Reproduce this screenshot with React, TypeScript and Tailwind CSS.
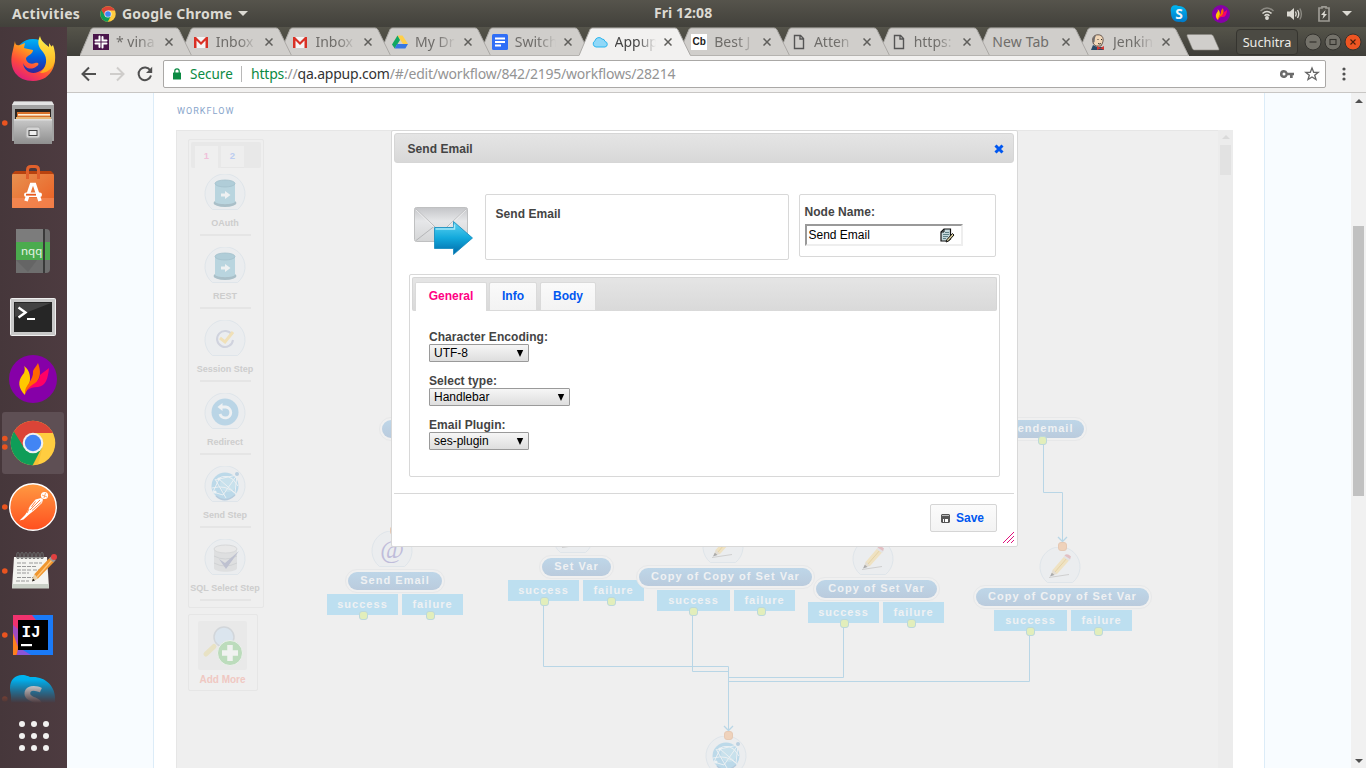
import React from "react";

const chromeFont = "font-['Noto_Sans','Liberation_Sans',sans-serif]";

/* ---------- dock icons (64x64 artboards) ---------- */

function ChromeArt({ id }: { id: string }) {
  return (
    <g>
      <defs>
        <clipPath id={id}>
          <circle cx="32" cy="32" r="22.3" />
        </clipPath>
      </defs>
      <g clipPath={`url(#${id})`}>
        <rect x="8" y="8" width="48" height="48" fill="#ffcd40" />
        <path d="M32 32 L23.3 37 L12 16 L4 40 L20 58 L31 56 L40.7 37 Z" fill="#0f9d58" />
        <path d="M32 32 L23.3 37 L10 16 L30 0 L60 6 L60 22 L32 22 Z" fill="#db4437" />
        <path d="M40.7 37 L31 55 L36 57 L42 35Z" fill="#f0b429" opacity=".5" />
      </g>
      <circle cx="32" cy="32" r="10.3" fill="#f1f1f1" />
      <circle cx="32" cy="32" r="8.2" fill="#4285f4" />
    </g>
  );
}

function FlameArt() {
  return (
    <g>
      <circle cx="32" cy="32" r="24" fill="#8600a8" />
      <path d="M22 46 C16 38 18 32 23 26 C24 23 24 21 23 19 C29 23 31 32 27 40 C25 43 24 46 24 48 Z" fill="#ffc800" />
      <path d="M24 47 C23 38 33 34 32 24 C33 21 36 19 37 16 C40 24 40 31 34 37 C28 40 26 43 24 47 Z" fill="#ff6600" />
      <path d="M27 43 C30 36 39 36 39 28 C42 25 46 23 48 21 C47 31 45 39 37 40 C32 40 29 41 27 43 Z" fill="#ff0066" />
    </g>
  );
}

function SkypeArt({ id }: { id: string }) {
  return (
    <g>
      <defs>
        <linearGradient id={id} x1="0" y1="0" x2="0" y2="1">
          <stop offset="0" stopColor="#00b6f0" />
          <stop offset="1" stopColor="#0078c8" />
        </linearGradient>
      </defs>
      <path
        d="M21 8 C26 8 28 10 30 10 C45 9 55 20 54 33 C54 36 55 38 55 42 C55 49 50 55 43 55 C39 55 37 53 33 54 C19 54 10 44 10 31 C10 27 9 25 9 21 C9 13 14 8 21 8 Z"
        fill={`url(#${id})`}
      />
      <text x="32" y="46" textAnchor="middle" fontSize="38" fontWeight="700" fill="#f2f5f7" fontFamily="Noto Sans, sans-serif">
        S
      </text>
    </g>
  );
}

const dockIcons: { node: React.ReactNode; dots: number[]; active?: boolean }[] = [
  {
    dots: [],
    node: (
      <g>
        <defs>
          <linearGradient id="ffA" x1="0.9" y1="0" x2="0.3" y2="1">
            <stop offset="0" stopColor="#fff44f" />
            <stop offset=".4" stopColor="#ff9a1f" />
            <stop offset=".7" stopColor="#ff4a3c" />
            <stop offset="1" stopColor="#e01e7c" />
          </linearGradient>
          <linearGradient id="ffB" x1="0" y1="0" x2="0" y2="1">
            <stop offset="0" stopColor="#00b3f4" />
            <stop offset=".5" stopColor="#0060df" />
            <stop offset="1" stopColor="#3a1e8c" />
          </linearGradient>
          <linearGradient id="ffC" x1="0" y1="0" x2="0" y2="1">
            <stop offset="0" stopColor="#fff04a" />
            <stop offset="1" stopColor="#ffa81a" />
          </linearGradient>
        </defs>
        <circle cx="32" cy="30" r="18" fill="url(#ffB)" />
        <path d="M14 14 C14 18 16 19 19 18 L24 16 L23 21 C25 22 29 22 32 23 C32 27 27 28 25 31 C25 35 29 38 34 36 C37 35 39 37 36 39 C30 44 24 41 22 36 C23 44 30 48 37 45 C46 42 48 33 45 25 L52 18 C58 34 52 54 32 54 C16 54 8 42 11 27 C12 23 13 18 14 14 Z" fill="url(#ffA)" />
        <path d="M39 9 C36 15 37 20 42 25 C47 31 46 40 39 46 C49 46 54 38 54 31 C54 23 50 19 48 16 L48 20 C44 17 40 14 39 9 Z" fill="url(#ffC)" />
      </g>
    ),
  },
  {
    dots: [32],
    node: (
      <g>
        <defs>
          <linearGradient id="cab" x1="0" y1="0" x2="0" y2="1">
            <stop offset="0" stopColor="#c9c9c9" />
            <stop offset="1" stopColor="#8f8f8f" />
          </linearGradient>
        </defs>
        <path d="M13 10.500 H51 L53 14 V50 H11 V14 Z" fill="#a3a3a3" />
        <path d="M13 10.500 H51 L53 14 H11 Z" fill="#e4e4e4" />
        <rect x="14" y="18" width="36" height="11" fill="#2b2522" />
        <rect x="16" y="21" width="33" height="8" fill="#d8702a" />
        <rect x="17" y="23" width="32" height="1.6" fill="#fff0d8" />
        <rect x="15" y="26" width="35" height="2" fill="#e9b878" />
        <rect x="13" y="28" width="38" height="25" fill="url(#cab)" />
        <rect x="13" y="28" width="38" height="1.5" fill="#dedede" />
        <rect x="25" y="36" width="14" height="11" rx="2" fill="#d5d5d5" stroke="#aaa" />
        <rect x="28" y="39.5" width="8" height="5" fill="#eee" stroke="#444" />
      </g>
    ),
  },
  {
    dots: [],
    node: (
      <g>
        <defs>
          <linearGradient id="bag" x1="0" y1="0" x2="1" y2="1">
            <stop offset="0" stopColor="#e79150" />
            <stop offset="1" stopColor="#ec5e22" />
          </linearGradient>
        </defs>
        <path d="M14 16 H50 L53 19 H11 Z" fill="#b8420f" />
        <rect x="11" y="19" width="42" height="34" rx="1" fill="url(#bag)" />
        <rect x="11" y="43" width="42" height="10" fill="#f58a57" opacity=".7" />
        <path d="M26.5 24 V15 Q26.5 11.5 30 11.5 H34 Q37.5 11.5 37.5 15 V24" fill="none" stroke="#e0602c" strokeWidth="3" />
        <path d="M25 46 L30.500 29.500 H33.500 L39 46" fill="none" stroke="#fff" strokeWidth="3.600" />
        <rect x="23" y="37.5" width="18" height="4.4" rx="2.2" fill="#fff" />
        <rect x="25" y="38.8" width="10" height="1.8" fill="#e95b1e" />
      </g>
    ),
  },
  {
    dots: [],
    node: (
      <g>
        <path d="M15 10 H45 Q49 10 49 14 V50 Q49 54 45 54 H15 Z" fill="#6e6e6e" />
        <path d="M15 10 H42 V23 H15 Z" fill="#7c7c7c" />
        <rect x="15" y="23" width="34" height="18" fill="#4bab4e" />
        <path d="M15 41 L27 53 L36 41 Z" fill="#5a5a5a" opacity=".45" />
        <rect x="42" y="10" width="2" height="44" fill="#3a3a3a" />
        <text x="20" y="35.5" fontSize="11.5" fill="#e8f3e8" fontFamily="Noto Sans, sans-serif">
          nqq
        </text>
      </g>
    ),
  },
  {
    dots: [],
    node: (
      <g>
        <rect x="9.5" y="15.500" width="45" height="37" rx="1" fill="#c8c8c8" stroke="#efefef" />
        <rect x="13" y="19" width="38" height="30" fill="#262626" />
        <path d="M14 20 H50 L14 34 Z" fill="#555" opacity=".6" />
        <path d="M17.500 24.500 L24.500 29.500 L17.500 34.500" fill="none" stroke="#fff" strokeWidth="2.4" />
        <rect x="26" y="35" width="8" height="2" fill="#fff" />
      </g>
    ),
  },
  { dots: [], node: <FlameArt /> },
  { dots: [27.5, 36], node: <ChromeArt id="dockChrome" />, active: true },
  {
    dots: [32],
    node: (
      <g>
        <defs>
          <linearGradient id="pm" x1="0" y1="0" x2="0" y2="1">
            <stop offset="0" stopColor="#ff9a42" />
            <stop offset="1" stopColor="#ff4f1f" />
          </linearGradient>
        </defs>
        <circle cx="32" cy="32" r="23.300" fill="url(#pm)" stroke="#fff" strokeWidth="1.400" />
        <circle cx="43.500" cy="20.500" r="3.600" fill="#fff" />
        <path d="M40 23 L34.500 24.500 L29 31 L26 37 L24 40 L18.500 45.500 L22.500 44.500 L28 39.500 L33 35.500 L41 28 L42 24.500 Z" fill="#fff" />
        <path d="M39 25 L29 35 M40.500 27 L31 35.500 M34.500 26.500 L30.500 32 M28 34 L26 38" stroke="#ff7a38" strokeWidth=".9" />
        <path d="M41 20 L46 22 M44.500 18 L43 23" stroke="#ff8a3c" strokeWidth=".7" />
      </g>
    ),
  },
  {
    dots: [32],
    node: (
      <g>
        <path d="M13 18 H46 L48 49 H11 Z" fill="#f4f4f0" />
        <path d="M11.300 45 H47.800 L48 49.500 H11 Z" fill="#c9cfc6" />
        <g fill="none" stroke="#666" strokeWidth="1.100">
          {[17, 21, 25, 29, 33, 37, 41].map((x) => (
            <ellipse key={x} cx={x} cy="16.500" rx="1.300" ry="3" />
          ))}
        </g>
        <path d="M16 24 H26 M28 24 H41 M16 27.500 H36 M16 31 H30 M32 31 H40 M16 34 H28 M16 38.500 H34 M15 42 H28" stroke="#999" strokeWidth="1" strokeDasharray="4 1" />
        <path d="M31 42 L33.500 35 L49 18.500 L53.500 22.500 L37 39.500 Z" fill="#f0962e" />
        <path d="M36 38 L51 21" stroke="#ffc477" strokeWidth="1.300" />
        <path d="M31 42 L33.500 35 L37 39.500 Z" fill="#e8d3ad" />
        <path d="M31 42.500 L32 39.500 L34 41.500 Z" fill="#222" />
        <path d="M48 19.500 L50.500 17 L54.800 21 L52.500 23.500 Z" fill="#999" />
        <circle cx="53" cy="18" r="3" fill="#e04040" />
      </g>
    ),
  },
  {
    dots: [32],
    node: (
      <g>
        <rect x="12" y="12" width="40" height="40" fill="#1a7af8" />
        <path d="M12 12 H31 L35 17 L17 52 H12 Z" fill="#f0326e" />
        <path d="M12 22 L17 26 V44 L12 38 Z" fill="#a24bc0" />
        <path d="M12 30 L18 47 L15 52 H12 Z" fill="#fc801d" />
        <path d="M17 44 L30 52 H16 Z" fill="#8a55d8" />
        <rect x="17" y="17" width="30" height="30" fill="#000" />
        <text x="20.500" y="33.500" fontSize="16" fontWeight="700" fill="#fff" fontFamily="Liberation Mono, monospace">
          IJ
        </text>
        <rect x="20" y="41" width="11" height="2.200" fill="#fff" />
      </g>
    ),
  },
];

function Dock() {
  return (
    <nav className="flex h-full w-[67px] shrink-0 flex-col overflow-hidden bg-linear-to-r from-[#46373b] to-[#4d3b40]">
      {dockIcons.map((d, i) => (
        <svg key={i} viewBox="-1 0 67 64" className="h-16 w-[67px] shrink-0">
          {d.active && <rect x="1" y="1" width="62" height="62" rx="3" fill="#5e4f54" />}
          {d.node}
          {d.dots.map((y) => (
            <circle key={y} cx="3.800" cy={y} r="2.800" fill="#e95420" />
          ))}
        </svg>
      ))}
      <div className="h-9 shrink-0 overflow-hidden mask-[linear-gradient(to_bottom,#000_35%,transparent)]">
        <svg viewBox="-1 0 67 64" className="h-16 w-[67px]">
          <SkypeArt id="dockSkype" />
          <circle cx="3.800" cy="32" r="2.800" fill="#e95420" />
        </svg>
      </div>
      <div className="mx-auto mt-[18px] grid grid-cols-3 gap-[6px]">
        {Array.from({ length: 9 }, (_, i) => (
          <span key={i} className="size-[6px] rounded-full bg-[#f2f1f0]" />
        ))}
      </div>
    </nav>
  );
}

/* ---------- desktop bar ---------- */

function TopBar() {
  return (
    <header className={`relative flex h-[27px] shrink-0 items-center bg-linear-to-b from-[#56544c] to-[#42413b] text-[14px] font-bold text-[#dcdad3] ${chromeFont}`}>
      <span className="ml-3 w-[68px] tracking-[0.32px] whitespace-nowrap">Activities</span>
      <svg viewBox="9 9 46 46" className="ml-5 size-4">
        <ChromeArt id="barChrome" />
      </svg>
      <span className="ml-[6px] w-[112px] tracking-[0.22px] whitespace-nowrap">Google Chrome</span>
      <svg viewBox="0 0 10 5" className="ml-1 h-[5px] w-[10px]">
        <path d="M0 0H10L5 5Z" fill="#dcdad3" />
      </svg>
      <span className="absolute top-[2px] left-[654px] w-[62px] tracking-[0.05px] whitespace-nowrap">Fri 12:08</span>
      <div className="ml-auto flex items-center">
        <svg viewBox="8 7 48 50" className="size-[18px]">
          <SkypeArt id="barSkype" />
        </svg>
        <svg viewBox="8 8 48 48" className="ml-6 size-[18px]">
          <FlameArt />
        </svg>
        <svg viewBox="0 0 14 13" className="ml-[30px] h-[13px] w-[14px]" fill="none" stroke="#dcdad3" strokeWidth="1.500">
          <path d="M.5 4 Q7 -2 13.500 4" stroke="#8b8982" />
          <path d="M2.500 6.500 Q7 2.500 11.500 6.500" />
          <path d="M4.500 8.800 Q7 6.500 9.500 8.800" />
          <circle cx="7" cy="11" r="1.200" fill="#dcdad3" />
        </svg>
        <svg viewBox="0 0 16 14" className="ml-[13px] h-[14px] w-[16px]" fill="none" stroke="#dcdad3" strokeWidth="1.400">
          <path d="M0 4.500H3L7 1V13L3 9.500H0Z" fill="#dcdad3" stroke="none" />
          <path d="M8.500 4.500Q10 7 8.500 9.500M10.500 3Q13 7 10.500 11" />
          <path d="M12.800 1.500Q16 7 12.800 12.500" stroke="#8b8982" />
        </svg>
        <svg viewBox="0 0 12 16" className="ml-[15px] h-4 w-3" fill="none">
          <path d="M4 2V.8H8V2H11V15H1V2Z" stroke="#9d9b94" strokeWidth="1.700" />
          <path d="M7.500 4L3 9H5.500L4.500 13L9 8H6.500Z" fill="#dcdad3" />
        </svg>
        <svg viewBox="0 0 10 5" className="mr-[14px] ml-[12px] h-[5px] w-[10px]">
          <path d="M0 0H10L5 5Z" fill="#dcdad3" />
        </svg>
      </div>
    </header>
  );
}

/* ---------- browser tabs ---------- */

const gmail = (
  <svg viewBox="0 0 16 16" className="size-4">
    <rect x="1" y="3" width="14" height="11" fill="#f4f4f4" />
    <path d="M1 3H3L8 8L13 3H15V14H12.500V6.500L8 11L3.500 6.500V14H1Z" fill="#d93025" />
  </svg>
);
const page = (
  <svg viewBox="0 0 16 16" className="size-4">
    <path d="M3.500 1.500H9.500L12.500 4.500V14.500H3.500ZM9 1.500V5H12.500" fill="none" stroke="#555" strokeWidth="1.400" />
  </svg>
);

const tabs: { title: string; icon: React.ReactNode; active?: boolean }[] = [
  {
    title: "* vina",
    icon: (
      <svg viewBox="0 0 16 16" className="size-4">
        <rect width="16" height="16" fill="#4a154b" />
        <path d="M6.500 2.500V6.500H2.500M9.500 3V6.500H13.500M2.500 9.500H6.500V13M9.500 13.500V9.500H13.500" fill="none" stroke="#fff" strokeWidth="2" strokeLinecap="round" />
      </svg>
    ),
  },
  { title: "Inbox", icon: gmail },
  { title: "Inbox", icon: gmail },
  {
    title: "My Dr",
    icon: (
      <svg viewBox="0 0 16 16" className="size-4">
        <path d="M5.500 1.500H10.500L16 10H11Z" fill="#ffcf48" />
        <path d="M5.500 1.500L0 10.500L2.700 14.500L8 6Z" fill="#11a861" />
        <path d="M5 10H16L13.300 14.500H2.700Z" fill="#3777e3" />
      </svg>
    ),
  },
  {
    title: "Switch",
    icon: (
      <svg viewBox="0 0 16 16" className="size-4">
        <rect width="16" height="16" rx="1.500" fill="#2f6ef6" />
        <path d="M3 4.500H13M3 8H13M3 11.500H9" stroke="#fff" strokeWidth="1.800" />
      </svg>
    ),
  },
  {
    title: "Appup",
    active: true,
    icon: (
      <svg viewBox="0 0 16 16" className="size-4">
        <path d="M4 13A3.300 3.300 0 0 1 3 6.800A4 4 0 0 1 10 5A3 3 0 0 1 13 7.500A2.800 2.800 0 0 1 13 13Z" fill="#90d8f8" stroke="#2bb5ee" />
      </svg>
    ),
  },
  {
    title: "Best J",
    icon: (
      <span className="flex size-4 items-center justify-center bg-white font-['Liberation_Sans',sans-serif] text-[10px] font-bold text-[#222]">Cb</span>
    ),
  },
  { title: "Atten", icon: page },
  { title: "https:", icon: page },
  { title: "New Tab", icon: null },
  {
    title: "Jenkin",
    icon: (
      <svg viewBox="0 0 16 16" className="size-4">
        <path d="M3.500 10C1.500 5 3 .8 8 .8S14 5 12.500 9L11 12H6Z" fill="#f0d6b7" stroke="#4b3b33" strokeWidth=".8" />
        <path d="M3.500 9C2 5 3 2 6 1.500C4.500 4 5 5 4.500 8Z" fill="#6d6b6d" />
        <path d="M1 16L3 11L7 13H13L14 16Z" fill="#2b4a66" />
        <path d="M7 12L10.500 14L14 12V16L10.500 14.500L7 16Z" fill="#d33833" />
        <path d="M7.500 5.500H8.500M11 5.500H12M8 9.500Q10 10.500 11 9.500" stroke="#222" strokeWidth=".9" fill="none" />
      </svg>
    ),
  },
];

function TabStrip() {
  return (
    <div className={`flex h-[29px] shrink-0 bg-linear-to-b from-[#55544a] to-[#3f3e39] pl-[13px] ${chromeFont}`}>
      {tabs.map((t, i) => (
        <div
          key={i}
          className="relative mr-[-12.3px] flex h-[29px] w-[112px] shrink-0 items-center"
          style={{ zIndex: t.active ? 30 : 20 - i }}
        >
          <svg viewBox="0 0 112 29" className="absolute inset-0 h-[29px] w-[112px]">
            <path
              d="M0 28.500 L11 2.500 Q11.800 1 13.500 1 H96 Q98 1 99 3 L111.500 28.500 V29 H0Z"
              fill={t.active ? "#f2f1f0" : "#d0cecb"}
            />
            <path d="M0 28.500 L11 2.500 Q11.800 1 13.500 1 H96 Q98 1 99 3 L111.500 28.500" fill="none" stroke="#aba9a6" strokeWidth="1" />
            {!t.active && <path d="M0 28.500H112" stroke="#b5b3b0" />}
          </svg>
          <div className={`relative flex w-full items-center ${t.icon ? "pl-[13px]" : "pl-[15px]"}`}>
            {t.icon}
            <span
              className={`overflow-hidden text-[14px] leading-5 whitespace-nowrap ${
                t.icon
                  ? "ml-[7px] w-[41px] mask-[linear-gradient(to_right,#000_55%,transparent_100%)]"
                  : "w-[61px] tracking-[0.1px]"
              } ${t.active ? "text-[#444]" : "text-[#6f6d6a]"}`}
            >
              {t.title}
            </span>
            <svg viewBox="0 0 8 8" className="absolute left-[85px] size-2">
              <path d="M.5 .5L7.500 7.500M7.500 .5L.5 7.500" stroke="#5f5e5b" strokeWidth="1.500" />
            </svg>
          </div>
        </div>
      ))}
      <svg viewBox="0 0 34 17" className="mt-[7px] ml-[9px] h-[17px] w-[34px] shrink-0">
        <path d="M1 2Q.5 .5 2 .5H25Q26.500 .5 27.300 2L33 15Q33.500 16 32 16H8.500Q7 16 6.300 14.500Z" fill="#d0cecb" stroke="#8a8882" strokeWidth=".6" />
      </svg>
      <div className="mt-[2px] mr-[4px] ml-auto flex h-[26px] items-center">
        <span className="mr-[6px] flex h-[26px] w-[62px] items-center justify-center rounded-[4px] border border-[#35342f] bg-[#4b4a43] pt-px text-[12.700px] text-[#efede8]">
          Suchitra
        </span>
        <svg viewBox="0 0 58 18" className="h-[18px] w-[58px]">
          <circle cx="9" cy="9" r="8" fill="#74726a" stroke="#34332f" />
          <path d="M5.500 9H12.500" stroke="#33322d" strokeWidth="1.200" />
          <circle cx="29" cy="9" r="8" fill="#74726a" stroke="#34332f" />
          <rect x="26" y="6.500" width="6" height="5" fill="none" stroke="#33322d" strokeWidth="1.100" />
          <circle cx="49" cy="9" r="8" fill="#ee5522" stroke="#34332f" />
          <path d="M46.500 6.500L51.500 11.500M51.500 6.500L46.500 11.500" stroke="#4a1f0c" strokeWidth="1.100" />
        </svg>
      </div>
    </div>
  );
}

function Toolbar() {
  return (
    <div className={`flex h-[37px] shrink-0 items-start border-b border-[#c8c6c4] bg-[#f2f1f0] pt-1 ${chromeFont}`}>
      <div className="flex h-7 w-24 items-center pl-[14px]">
        <svg viewBox="0 0 16 16" className="size-4" fill="none" stroke="#505050" strokeWidth="2">
          <path d="M15 8H2M8 1.500L1.500 8L8 14.500" />
        </svg>
        <svg viewBox="0 0 16 16" className="ml-3 size-4" fill="none" stroke="#cfcdcb" strokeWidth="2">
          <path d="M1 8H14M8 1.500L14.500 8L8 14.500" />
        </svg>
        <svg viewBox="0 0 16 16" className="ml-3 size-4" fill="none" stroke="#505050" strokeWidth="2">
          <path d="M13.300 4.500A6.300 6.300 0 1 0 14 9.500" />
          <path d="M15.200 .8V7H9Z" fill="#505050" stroke="none" />
        </svg>
      </div>
      <div className="flex h-7 w-[1163px] items-center rounded-[2px] border border-[#aaa8a6] bg-white pl-[9px] text-[14px] whitespace-nowrap">
        <svg viewBox="0 0 8 12" className="h-3 w-2">
          <rect y="4.500" width="8" height="7" rx=".5" fill="#0b8a43" />
          <path d="M1.800 5V3A2.200 2.200 0 0 1 6.200 3V5" fill="none" stroke="#0b8a43" strokeWidth="1.200" />
        </svg>
        <span className="ml-[9px] w-[51px] text-[13.500px] text-[#0b8a43]">Secure</span>
        <span className="h-4 w-px bg-[#b8b8b8]" />
        <span className="ml-[9px] pb-[2px] tracking-[-0.21px] text-[#949494]">
          <span className="text-[#0b8a43]">https</span>://<span className="text-[#333]">qa.appup.com</span>/#/edit/workflow/842/2195/workflows/28214
        </span>
        <svg viewBox="0 0 14 8" className="mr-[10px] ml-auto h-2 w-[14px]">
          <path d="M4 0A4 4 0 1 0 7.700 5.300H10V8H12.700V5.300H14V2.700H7.700A4 4 0 0 0 4 0ZM4 2.500A1.500 1.500 0 1 1 4 5.500A1.500 1.500 0 1 1 4 2.500" fill="#6b6b6b" fillRule="evenodd" />
        </svg>
        <svg viewBox="0 0 16 16" className="mr-[5px] size-4">
          <path d="M8 2L9.700 6.300H14.200L10.700 9.200L12 13.600L8 11L4 13.600L5.300 9.200L1.800 6.300H6.300Z" fill="none" stroke="#666" strokeWidth="1.300" />
        </svg>
      </div>
      <svg viewBox="0 0 4 14" className="mt-[7px] ml-4 h-[14px] w-1">
        <circle cx="2" cy="2" r="1.600" fill="#505050" />
        <circle cx="2" cy="7" r="1.600" fill="#505050" />
        <circle cx="2" cy="12" r="1.600" fill="#505050" />
      </svg>
    </div>
  );
}

/* ---------- workflow art (42x37 badge with a flat base) ---------- */

function Badge({ children }: { children?: React.ReactNode }) {
  return (
    <svg viewBox="0 0 42 37" className="h-[37px] w-[42px] shrink-0">
      <path d="M8.500 35.500 A20 20 0 1 1 33.500 35.500 Z" fill="#ebedef" stroke="#dfe5ea" />
      {children}
    </svg>
  );
}

const database = (
  <g>
    <ellipse cx="21" cy="29" rx="11.500" ry="4" fill="#a9bfc8" />
    <path d="M11 9V27.500C11 31 31 31 31 27.500V9Z" fill="#b9d5df" />
    <ellipse cx="21" cy="9.500" rx="10" ry="3.500" fill="#b0cdd8" stroke="#a3c0cb" strokeWidth=".8" />
    <path d="M17 19.500H21V17L26.500 21L21 25V22.500H17Z" fill="#eef1f2" />
  </g>
);
const check = (
  <g fill="none">
    <path d="M28 15A8 8 0 1 0 29 20" stroke="#d0d3de" strokeWidth="2" />
    <path d="M16 18L21 22L29 12" stroke="#f0e0b8" strokeWidth="3" />
  </g>
);
const redirect = (
  <g>
    <circle cx="21" cy="19" r="13.500" fill="#bad5e6" />
    <path d="M16 14H22A5.500 5.500 0 1 1 16 21" fill="none" stroke="#eef1f3" strokeWidth="2.800" />
    <path d="M13.500 14L18.500 10V18Z" fill="#eef1f3" />
  </g>
);
const globe = (
  <g>
    <circle cx="21" cy="20" r="13.500" fill="#bcd9e9" />
    <circle cx="24" cy="18" r="8" fill="#c8e1ec" />
    <path d="M9 26L15 13L33 9M15 13L31 27L33 9L19 29L9 26M11 13L22 32M12 14Q25 4 34 20M8 22Q22 18 32 28" fill="none" stroke="#ebf0f3" strokeWidth="1" />
    <circle cx="15" cy="13" r="1.600" fill="#edf2f4" />
    <circle cx="11" cy="26" r="1.600" fill="#edf2f4" />
    <circle cx="33" cy="8" r="2" fill="#bacfe0" />
    <path d="M12 30Q21 38 31 29" stroke="#b6cbdd" fill="none" strokeWidth="1.500" />
  </g>
);
const sql = (
  <g>
    <path d="M10 10V29C10 34 33 34 33 29V10Z" fill="#dedfe0" />
    <ellipse cx="21.500" cy="10" rx="11.500" ry="4" fill="#e8e8e8" stroke="#d7d8d9" />
    <path d="M10 17Q21 23 33 17M10 24Q21 30 33 24" stroke="#d0d2d4" fill="none" />
    <path d="M15 20L21 24L35 12L22 30Z" fill="#bec1d0" />
  </g>
);
const pencil = (
  <g>
    <path d="M12 28L14 22.500L26 8.500L31 12.500L18 27Z" fill="#efe2c2" />
    <path d="M15.500 25.500L28.500 10.500" stroke="#e5d3a5" strokeWidth="1" />
    <path d="M12 28L14 22.500L18 27Z" fill="#e3ddd3" />
    <path d="M11 29.500L12.800 25.800L15.500 28Z" fill="#aaa" />
    <path d="M24.500 10L27 7.500L32 11.500L30 14Z" fill="#e3e3e6" />
    <path d="M25.500 8.500Q28 5.500 32 9.500L31 12Z" fill="#e2bfc3" />
    <path d="M10 30.500L30 27.500" stroke="#cfcfcf" />
  </g>
);

const palette: { label: string; art: React.ReactNode }[] = [
  { label: "OAuth", art: database },
  { label: "REST", art: database },
  { label: "Session Step", art: check },
  { label: "Redirect", art: redirect },
  { label: "Send Step", art: globe },
  { label: "SQL Select Step", art: sql },
];

function Palette() {
  return (
    <aside className="flex w-[76px] flex-col pt-2 text-[9px] font-bold text-[#cdcdcd]">
      <div className="flex h-[469px] w-[76px] flex-col items-center rounded-[2px] border border-[#e6e6e6] pt-[2px]">
        <div className="flex h-[26px] w-[70px] items-end gap-[3px] rounded-[2px] bg-[#e8e8e8] pl-1 text-[9.500px]">
          <span className="flex h-[22px] w-[23px] items-center justify-center bg-[#efefef] pb-[2px] text-[#f0bfd9]">1</span>
          <span className="flex h-[22px] w-[23px] items-center justify-center border-b border-[#e6e6e6] bg-[#eee] pb-px text-[#bccdf1]">2</span>
        </div>
        {palette.map((p) => (
          <div key={p.label} className="flex h-[73px] w-full flex-col items-center pt-[6px] pr-[2px]">
            <Badge>{p.art}</Badge>
            <span className="mt-[6px] text-center leading-3 whitespace-nowrap">{p.label}</span>
            <span className="mt-[5px] h-[2px] w-[51px] shrink-0 bg-[#e5e5e5]" />
          </div>
        ))}
      </div>
      <div className="mt-[6px] flex h-[77px] w-[70px] flex-col items-center rounded-[2px] border border-[#e6e6e6] pt-[6px] pr-px">
        <svg viewBox="0 0 49 49" className="size-[49px] shrink-0">
          <rect width="49" height="49" rx="2" fill="#e9e9e9" />
          <circle cx="26" cy="16" r="10" fill="#dbe5ee" stroke="#d2d6da" strokeWidth="1.500" />
          <path d="M8 33L16 25.500" stroke="#e8e2c4" strokeWidth="5" strokeLinecap="round" />
          <circle cx="32" cy="32" r="12.500" fill="#bcdcbc" stroke="#edf0ed" />
          <path d="M32 24V40M24 32H40" stroke="#f0f2f0" strokeWidth="5.500" />
        </svg>
        <span className="mt-1 text-[10px] leading-3 whitespace-nowrap text-[#f0c8c2]">Add More</span>
      </div>
    </aside>
  );
}

/* ---------- diagram; coordinates are relative to the canvas (origin 176,130) ---------- */

type FlowNode = {
  label: string;
  x: number;
  y: number;
  w: number;
  icon?: { x: number; art: React.ReactNode };
  outs?: { x: number; ws: number; dot1: number; dot2: number };
};

const nodes: FlowNode[] = [
  { label: "", x: 206, y: 290, w: 90 },
  {
    label: "Send Email", x: 172, y: 442, w: 94,
    icon: {
      x: 195,
      art: (
        <text x="21" y="27" textAnchor="middle" fontSize="26" fontStyle="italic" fontWeight="400" fill="#bfbcda" fontFamily="Liberation Serif, serif" letterSpacing="0">
          @
        </text>
      ),
    },
    outs: { x: 151, ws: 71, dot1: 183, dot2: 250 },
  },
  { label: "Set Var", x: 366, y: 428, w: 69, icon: { x: 376, art: pencil }, outs: { x: 332, ws: 71, dot1: 364, dot2: 431 } },
  { label: "Copy of Copy of Set Var", x: 463, y: 438, w: 173, icon: { x: 526, art: pencil }, outs: { x: 481, ws: 73, dot1: 513, dot2: 581 } },
  { label: "Copy of Set Var", x: 640, y: 450, w: 121, icon: { x: 676, art: pencil }, outs: { x: 632, ws: 71, dot1: 664, dot2: 731 } },
  { label: "Copy of Copy of Set Var", x: 800, y: 458, w: 173, icon: { x: 863, art: pencil }, outs: { x: 818, ws: 73, dot1: 850, dot2: 918 } },
  { label: "sendemail", x: 824, y: 290, w: 84 },
];

function Dot({ x, y, orange }: { x: number; y: number; orange?: boolean }) {
  return (
    <span
      className={`absolute size-[9px] rounded-[3px] border ${orange ? "border-[#e6c9b4] bg-[#efd2bb]" : "border-[#bcd8dc] bg-[#e2eebb]"}`}
      style={{ left: x, top: y }}
    />
  );
}

function Diagram() {
  return (
    <div className="absolute inset-0 overflow-hidden text-[11px] font-bold tracking-[1.02px] text-[#eff1f3]">
      {nodes.map((n, i) => (
        <React.Fragment key={i}>
          {n.icon && (
            <div className="absolute" style={{ left: n.icon.x, top: n.y - 41 }}>
              <Badge>{n.icon.art}</Badge>
            </div>
          )}
          {n.outs && (
            <div className="absolute flex gap-1" style={{ left: n.outs.x, top: n.y + 22 }}>
              <span className="flex h-[21px] items-center justify-center bg-[#bddff0]" style={{ width: n.outs.ws }}>success</span>
              <span className="flex h-[21px] w-[61px] items-center justify-center bg-[#bddff0]">failure</span>
            </div>
          )}
          <div
            className="absolute flex h-6 items-center rounded-full border border-[#e7e8e9] bg-[#f0f0f0] p-[2px]"
            style={{ left: n.x - 3, top: n.y - 3, width: n.w + 6 }}
          >
            <span className="flex h-[18px] w-full items-center justify-center rounded-full bg-linear-to-b from-[#bed6e8] to-[#bacbdd] pb-px whitespace-nowrap">
              {n.label}
            </span>
          </div>
        </React.Fragment>
      ))}
      <div className="absolute top-[606px] left-[529px]">
        <Badge>{globe}</Badge>
      </div>
      <svg viewBox="0 0 1042 638" className="absolute top-0 left-0 h-[638px] w-[1042px]" fill="none" stroke="#b9d6e6">
        <path d="M367.500 475V536.500H552.500V600" />
        <path d="M516.500 485V541.500H552.500" />
        <path d="M667.500 496V547.500H552.500" />
        <path d="M853.500 504V551.500H552.500" />
        <path d="M548 596L552.500 600.500L557 596" strokeWidth="1.300" />
        <path d="M867.500 315V362.500H886.500V411" />
        <path d="M882 407L886.500 411.500L891 407" strokeWidth="1.300" />
      </svg>
      {nodes.map(
        (n, i) =>
          n.outs && (
            <React.Fragment key={i}>
              <Dot x={n.outs.dot1} y={n.y + 39} />
              <Dot x={n.outs.dot2} y={n.y + 39} />
            </React.Fragment>
          ),
      )}
      <Dot x={862} y={306} />
      <Dot x={882} y={412} orange />
      <Dot x={548} y={601} orange />
      <Dot x={214} y={396} orange />
    </div>
  );
}

/* ---------- dialog ---------- */

function Select({ label, value, wide }: { label: string; value: string; wide?: boolean }) {
  return (
    <div className="flex h-11 flex-col items-start">
      <span className="h-[14px] leading-[14px] font-bold tracking-[0.05px] text-[#444]">{label}</span>
      <div
        className={`flex h-[18px] items-center justify-between rounded-[1px] border border-[#9a9a9a] bg-linear-to-b from-[#f6f6f6] to-[#dedede] pr-1 pl-1 text-black ${
          wide ? "w-[141px]" : "w-[100px]"
        }`}
      >
        <span className="leading-4">{value}</span>
        <svg viewBox="0 0 8 7" className="h-[7px] w-2">
          <path d="M.8 0H7.200L4 7Z" fill="#000" />
        </svg>
      </div>
    </div>
  );
}

function EnvelopeIcon() {
  return (
    <svg viewBox="0 0 60 50" className="h-[50px] w-[60px]">
      <defs>
        <linearGradient id="env" x1="0" y1="0" x2="0" y2="1">
          <stop offset="0" stopColor="#c4c5c8" />
          <stop offset=".4" stopColor="#e6e7e9" />
          <stop offset="1" stopColor="#d4d5d6" />
        </linearGradient>
        <linearGradient id="arrow" x1="0" y1="0" x2="0" y2="1">
          <stop offset="0" stopColor="#5fd4f2" />
          <stop offset=".5" stopColor="#12a9dc" />
          <stop offset="1" stopColor="#0069a8" />
        </linearGradient>
      </defs>
      <rect x=".5" y="1.500" width="53" height="34" rx="2" fill="url(#env)" stroke="#bfc0c1" />
      <path d="M2 34.500L20 20.500M52 34.500L34 20.500M2 3L22 22Q27 26 32 22L52 3" fill="none" stroke="#b5b6b8" />
      <path d="M2 3.800L22 23M52 3.800L32 23" fill="none" stroke="#f7f7f8" strokeWidth=".8" />
      <path d="M20.500 21.500H39.500V15.500L58.500 32L39.500 48.500V42.500H20.500Z" fill="url(#arrow)" stroke="#1089bd" strokeWidth=".8" />
      <path d="M21.500 23H40.500V18.500" fill="none" stroke="#a6e8f8" strokeWidth="1.500" />
    </svg>
  );
}

function Dialog() {
  return (
    <section className="absolute top-[37px] left-[324px] flex h-[417px] w-[627px] flex-col items-center rounded-[2px] border border-[#d8d8d8] bg-white pt-[2px] text-[12px] text-[#444]">
      <div className="ml-[2px] flex h-[30px] w-[620px] items-center justify-between self-start rounded-[3px] border border-[#d6d6d6] bg-linear-to-b from-[#e5e5e5] to-[#d8d8d8] pr-[9px] pl-[12.500px]">
        <span className="pt-[2px] font-bold tracking-[0.05px]">Send Email</span>
        <svg viewBox="0 0 10 10" className="mt-px size-[10px]">
          <path d="M1.500 1.500L8.500 8.500M8.500 1.500L1.500 8.500" stroke="#0057f0" strokeWidth="3" />
        </svg>
      </div>
      <div className="mt-[31px] ml-[17px] flex w-[591px] items-start self-start">
        <div className="w-[76px] pt-3 pl-[5px]">
          <EnvelopeIcon />
        </div>
        <div className="h-[66px] w-[304px] rounded-[2px] border border-[#d8d8d8] pt-[11px] pl-[9.500px] leading-4 font-bold tracking-[0.05px]">Send Email</div>
        <div className="ml-[10px] h-[63px] w-[197px] rounded-[2px] border border-[#d8d8d8] pt-[10px] pl-[5px]">
          <div className="-ml-[0.5px] h-[14px] leading-[14px] font-bold tracking-[0.05px]">Node Name:</div>
          <div className="mt-[5px] flex h-[22px] w-[158px] items-center justify-between border-2 border-t-[#999] border-r-[#eee] border-b-[#eee] border-l-[#999] pr-[6px] pl-[1.500px] text-black">
            <span className="leading-4">Send Email</span>
            <svg viewBox="0 0 15 15" className="size-[15px]">
              <path d="M4 1H10.500V11L8 13H1V4Z" fill="#c5d8dc" stroke="#111" strokeWidth="1.200" />
              <path d="M4 1V4H1" fill="none" stroke="#111" />
              <path d="M5 4.500H9M3 6.500H9M3 8.500H8M3 10.500H6" stroke="#54777d" strokeWidth=".9" />
              <path d="M6 14L7 11.500L12.500 5.500L14 7L8.500 13Z" fill="#d9cf9c" stroke="#111" strokeWidth="1" />
            </svg>
          </div>
        </div>
      </div>
      <div className="mt-[14px] ml-[17px] flex h-[203px] w-[591px] flex-col self-start rounded-[2px] border border-[#d8d8d8] p-[2px]">
        <div className="flex h-[34px] w-[585px] items-end gap-[3px] rounded-[2px] border border-b-0 border-[#d6d6d6] bg-linear-to-b from-[#e5e5e5] to-[#d9d9d9] pl-[2px] font-bold text-[#0057f0]">
          <span className="flex h-[29px] w-[72px] items-center justify-center rounded-t-[2px] border border-b-0 border-[#dadada] bg-white pb-[2px] text-[#ff0084]">General</span>
          <span className="-ml-px flex h-[29px] w-[48px] items-center justify-center rounded-t-[2px] border border-[#dadada] bg-linear-to-b from-[#fafafa] to-[#f3f3f3] pb-[2px]">Info</span>
          <span className="flex h-[29px] w-[56px] items-center justify-center rounded-t-[2px] border border-[#dadada] bg-linear-to-b from-[#fafafa] to-[#f3f3f3] pb-[2px]">Body</span>
        </div>
        <div className="flex flex-col pt-[19px] pl-[17px]">
          <Select label="Character Encoding:" value="UTF-8" />
          <Select label="Select type:" value="Handlebar" wide />
          <Select label="Email Plugin:" value="ses-plugin" />
        </div>
      </div>
      <div className="mt-4 ml-[2px] flex h-[53px] w-[620px] items-start justify-end self-start border-t border-[#d8d8d8] pt-[10px]">
        <div className="flex h-7 w-[67px] items-center rounded-[2px] border border-[#d5d5d5] bg-linear-to-b from-[#fbfbfb] to-[#f3f3f3] pl-[10px] font-bold text-[#0057f0]">
          <svg viewBox="0 0 9 9" className="mr-[6px] size-[9px]">
            <path d="M1 0H8L9 1V8L8 9H1L0 8V1Z" fill="#555" />
            <path d="M1 1.500H8" stroke="#bbb" />
            <rect x="2" y="5" width="5" height="3" fill="#fff" />
            <rect x="3" y="5" width="1" height="3" fill="#555" />
          </svg>
          Save
        </div>
        <svg viewBox="0 0 11 11" className="mt-[28px] ml-[6px] size-[11px]" stroke="#e0107c" strokeWidth="1">
          <path d="M0 11L11 0M4 11L11 4M8 11L11 8" />
        </svg>
      </div>
    </section>
  );
}

/* ---------- page ---------- */

function Viewport() {
  return (
    <main className="relative flex min-h-0 flex-1 overflow-hidden bg-white font-['Liberation_Sans',sans-serif]">
      <div className="w-[87px] shrink-0 border-r border-[#dcecf8] bg-[#f8fcff]" />
      <div className="flex w-[1110px] shrink-0 flex-col pl-[22px]">
        <div className="flex h-[37px] items-center pl-px font-[Roboto,sans-serif] text-[9px] tracking-[1.05px] text-[#88a5cb]">WORKFLOW</div>
        <div className="relative flex w-[1057px] flex-1 bg-[#efefef]">
          <div className="relative flex-1 border-t border-l border-[#e6e6e6] pl-[11px]">
            <Palette />
          </div>
          <div className="flex w-[15px] flex-col items-center bg-[#ececec] pt-[5px]">
            <svg viewBox="0 0 8 4" className="h-1 w-2">
              <path d="M4 0L8 4H0Z" fill="#dadada" />
            </svg>
            <span className="mt-[6px] h-[30px] w-[11px] bg-[#e2e2e2]" />
          </div>
          <Diagram />
        </div>
      </div>
      <div className="w-[87px] shrink-0 border-l border-[#dcecf8] bg-[#f8fcff]" />
      <div className="flex w-[15px] shrink-0 flex-col items-center bg-[#f1f1f1] pt-[6px] pb-[5px]">
        <svg viewBox="0 0 8 4" className="h-1 w-2 shrink-0">
          <path d="M4 0L8 4H0Z" fill="#505050" />
        </svg>
        <span className="mt-[123px] h-[270px] w-[11px] shrink-0 bg-[#c1c1c1]" />
        <svg viewBox="0 0 8 4" className="mt-auto h-1 w-2 shrink-0">
          <path d="M0 0H8L4 4Z" fill="#505050" />
        </svg>
      </div>
      <Dialog />
    </main>
  );
}

export default function App() {
  return (
    <div className="flex h-[768px] w-[1366px] flex-col overflow-hidden bg-white">
      <TopBar />
      <div className="flex min-h-0 flex-1">
        <Dock />
        <div className="flex w-[1299px] flex-col">
          <TabStrip />
          <Toolbar />
          <Viewport />
        </div>
      </div>
    </div>
  );
}
